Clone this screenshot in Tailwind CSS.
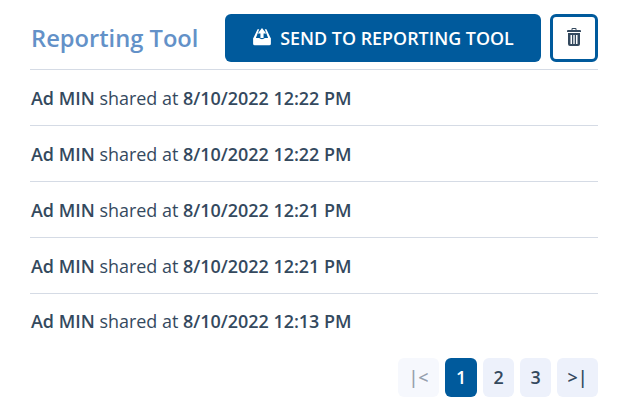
<!DOCTYPE html>
<html lang="en">
  <head>
    <meta charset="UTF-8" />
    <title>Reporting Tool</title>
    <script src="https://cdn.jsdelivr.net/npm/@tailwindcss/browser@4"></script>
  </head>
  <body class="bg-white font-['Open_Sans',sans-serif] text-[#34495e]">
    <div class="w-[625px] h-[404px] pl-[30px] pr-[27px] pt-[14px] overflow-hidden">
      <div class="flex items-center h-[48px]">
        <h2 class="flex-1 ml-[1px] text-[23.7px] font-semibold text-[#6391c8] mt-[1px]">Reporting Tool</h2>
        <button class="flex items-center justify-center gap-[8px] w-[316px] h-[48px] rounded-[6px] bg-[#005a9c] text-white text-[17.9px] font-semibold">
          <svg class="mb-[2px]" width="20" height="18" viewBox="0 0 18 16" fill="#fff">
            <path d="M5 1 H6.500 L3.500 9 H6.500 A2.800 1.800 0 0 0 11.500 9 H14.500 L11.500 1 H13 L16.500 8.500 A1 1 0 0 1 17 9.500 V14 A1.500 1.500 0 0 1 15.500 15.500 H2.500 A1.500 1.500 0 0 1 1 14 V9.500 A1 1 0 0 1 1.500 8.500 Z" />
            <path d="M9 0 L12.800 4.800 H10.400 V9 H7.600 V4.800 H5.200 Z" />
          </svg>
          SEND TO REPORTING TOOL
        </button>
        <button class="flex items-center justify-center w-[48px] h-[48px] ml-[9px] rounded-[6px] border-[3px] border-[#005a9c] bg-white">
          <svg class="mb-[3px]" width="14" height="18" viewBox="0 0 14 18" fill="#34495e">
            <path d="M4.500 2 V1 A1 1 0 0 1 5.500 0 H8.500 A1 1 0 0 1 9.500 1 V2 H13 A1 1 0 0 1 14 3 V4 H0 V3 A1 1 0 0 1 1 2 Z M5.500 2 H8.500 V1 H5.500 Z" fill-rule="evenodd" />
            <path d="M1 5 H13 V16 A2 2 0 0 1 11 18 H3 A2 2 0 0 1 1 16 Z M3.500 7 V16 H5 V7 Z M6.300 7 V16 H7.700 V7 Z M9 7 V16 H10.500 V7 Z" fill-rule="evenodd" />
          </svg>
        </button>
      </div>
      <ul class="mt-[7px] border-t border-[#d5dbe5] text-[17.95px]">
        <li class="flex items-center h-[56px] pt-[2px] pl-[1px] border-b border-[#d5dbe5]"><p><b class="font-semibold">Ad MIN</b> shared at <b class="font-semibold">8/10/2022 12:22 PM</b></p></li>
        <li class="flex items-center h-[56px] pt-[2px] pl-[1px] border-b border-[#d5dbe5]"><p><b class="font-semibold">Ad MIN</b> shared at <b class="font-semibold">8/10/2022 12:22 PM</b></p></li>
        <li class="flex items-center h-[56px] pt-[2px] pl-[1px] border-b border-[#d5dbe5]"><p><b class="font-semibold">Ad MIN</b> shared at <b class="font-semibold">8/10/2022 12:21 PM</b></p></li>
        <li class="flex items-center h-[56px] pt-[2px] pl-[1px] border-b border-[#d5dbe5]"><p><b class="font-semibold">Ad MIN</b> shared at <b class="font-semibold">8/10/2022 12:21 PM</b></p></li>
        <li class="flex items-center h-[54px] pl-[1px]"><p><b class="font-semibold">Ad MIN</b> shared at <b class="font-semibold">8/10/2022 12:13 PM</b></p></li>
      </ul>
      <div class="flex justify-end gap-[6px] mt-[10px] text-[17.9px] font-semibold">
        <button class="w-[41px] h-[39px] rounded-[6px] bg-[#f6f8fd] text-[#34495e]/50">|&lt;</button>
        <button class="w-[32px] h-[39px] rounded-[6px] bg-[#005a9c] text-white">1</button>
        <button class="w-[31px] h-[39px] rounded-[6px] bg-[#edf1fb]">2</button>
        <button class="w-[31px] h-[39px] rounded-[6px] bg-[#edf1fb]">3</button>
        <button class="w-[41px] h-[39px] rounded-[6px] bg-[#edf1fb]">&gt;|</button>
      </div>
    </div>
  </body>
</html>
